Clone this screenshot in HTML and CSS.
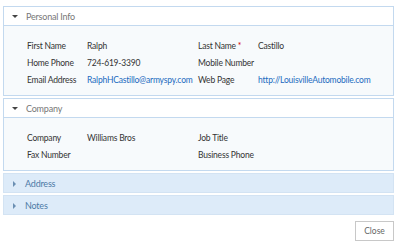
FILE: index.html
```html
<!DOCTYPE html>
<html lang="en">
<head>
  <meta charset="UTF-8" />
  <meta name="viewport" content="width=device-width, initial-scale=1.0"/>
  <title>Contact</title>
  <link rel="stylesheet" href="styles.css">
</head>
<body>

  <div class="panel">
    <div class="panel-head"><span class="arrow-down"></span>Personal Info</div>
    <div class="panel-body">
      <div class="field-grid">
        <span class="label">First Name</span>
        <span class="value">Ralph</span>
        <span class="label">Last Name <span class="req">*</span></span>
        <span class="value">Castillo</span>

        <span class="label">Home Phone</span>
        <span class="value">724-619-3390</span>
        <span class="label">Mobile Number</span>
        <span class="value"></span>

        <span class="label">Email Address</span>
        <a class="value link" href="#">RalphHCastillo@armyspy.com</a>
        <span class="label">Web Page</span>
        <a class="value link" href="#">http://LouisvilleAutomobile.com</a>
      </div>
    </div>
  </div>

  <div class="panel">
    <div class="panel-head"><span class="arrow-down"></span>Company</div>
    <div class="panel-body">
      <div class="field-grid">
        <span class="label">Company</span>
        <span class="value">Williams Bros</span>
        <span class="label">Job Title</span>
        <span class="value"></span>

        <span class="label">Fax Number</span>
        <span class="value"></span>
        <span class="label">Business Phone</span>
        <span class="value"></span>
      </div>
    </div>
  </div>

  <div class="panel collapsed">
    <div class="panel-head"><span class="arrow-right"></span>Address</div>
  </div>

  <div class="panel collapsed">
    <div class="panel-head"><span class="arrow-right"></span>Notes</div>
  </div>

  <div class="footer">
    <button class="close-btn">Close</button>
  </div>

</body>
</html>
```

FILE: styles.css
```css
:root {
  --border: #c3d9ef;
  --text: #333333;
  --muted: #777777;
  --link: #1b6ac0;
}

body {
  margin: 0;
  padding: 6px 6px 0 3px;
  font-family: Lato, sans-serif;
  font-size: 8.5px;
  letter-spacing: -0.2px;
  color: var(--text);
  background-color: #ffffff;
}

.panel {
  border: 1px solid var(--border);
  margin-bottom: 2px;
}

.panel-head {
  display: flex;
  align-items: center;
  height: 18px;
  padding-left: 8px;
  background-color: #ffffff;
  color: var(--muted);
  font-size: 9px;
  border-bottom: 1px solid var(--border);
}

.arrow-down {
  width: 0;
  height: 0;
  border-left: 3px solid transparent;
  border-right: 3px solid transparent;
  border-top: 3px solid #444444;
  margin-right: 8px;
}

.arrow-right {
  width: 0;
  height: 0;
  border-top: 3px solid transparent;
  border-bottom: 3px solid transparent;
  border-left: 3px solid #6b8fb3;
  margin-right: 9px;
  margin-left: 1px;
}

.panel-body {
  background-color: #f7fafc;
  padding: 11px 0 7px 23px;
}

.field-grid {
  display: grid;
  grid-template-columns: 60px 111px 60px 1fr;
  grid-auto-rows: 17px;
  align-items: center;
}

.label,
.value {
  white-space: nowrap;
}

.req {
  color: #d40000;
}

.link {
  color: var(--link);
  text-decoration: none;
}

.collapsed {
  border-color: #d3e3f3;
}

.collapsed .panel-head {
  background-color: #ddebf9;
  color: #4d7aa6;
  border-bottom: none;
  padding-top: 1px;
  height: 17px;
}

.footer {
  display: flex;
  justify-content: flex-end;
  margin-top: 6px;
}

.close-btn {
  width: 39px;
  height: 20px;
  padding: 0;
  border: 1px solid #c8c8c8;
  background-color: #ffffff;
  color: #666666;
  font-family: Lato, sans-serif;
  font-size: 8.5px;
}
```
